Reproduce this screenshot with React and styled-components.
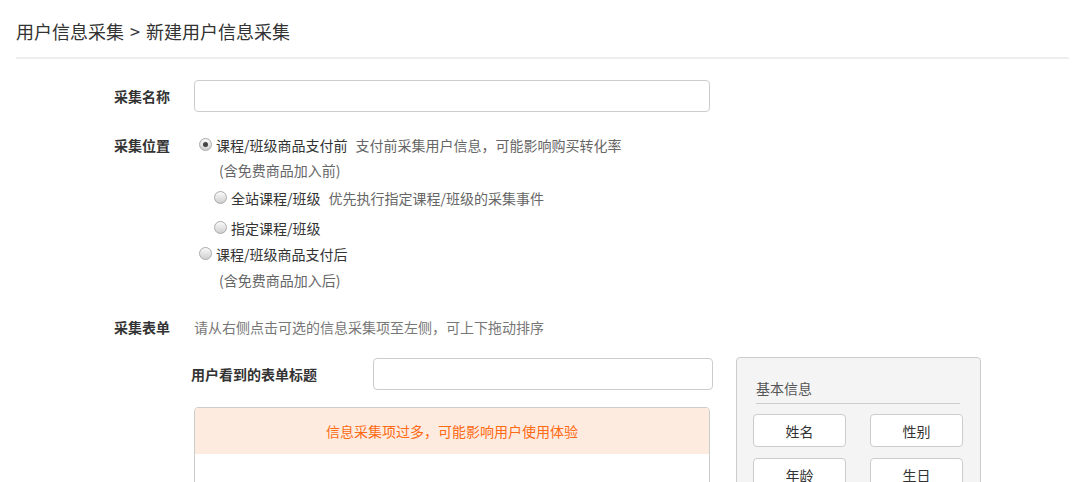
import React from "react";
import styled, { createGlobalStyle } from "styled-components";

const GlobalStyle = createGlobalStyle`
  body {
    margin: 0;
    background: #fff;
    font-family: "Noto Sans CJK SC", "Noto Sans", sans-serif;
    color: #333;
  }
  * { box-sizing: border-box; }
`;

const Page = styled.div`
  padding: 0 14px 0 16px;
  height: 482px;
  overflow: hidden;
`;

const Header = styled.div`
  padding: 19px 0 14px;
  font-size: 18px;
  line-height: 24px;
  color: #333;
  border-bottom: 2px solid #eee;
`;

const Sep = styled.span`
  margin: 0 2px;
`;

const Form = styled.div`
  padding-left: 98px;
  padding-top: 21px;
`;

const Row = styled.div`
  display: flex;
  align-items: ${(p) => (p.$top ? "flex-start" : "center")};
  margin-top: ${(p) => p.$mt || 0}px;
`;

const Label = styled.div`
  width: ${(p) => p.$w || 80}px;
  flex-shrink: 0;
  font-size: 14px;
  line-height: 20px;
  font-weight: bold;
  color: #333;
`;

const Input = styled.input`
  width: ${(p) => p.$w}px;
  height: 32px;
  border: 1px solid #ccc;
  border-radius: 4px;
  background: #fff;
  outline: none;
  padding: 0 10px;
  font-size: 14px;
`;

const Options = styled.div`
  display: flex;
  flex-direction: column;
`;

const Option = styled.label`
  display: flex;
  align-items: center;
  font-size: 14px;
  line-height: 20px;
  color: #333;
  margin-top: ${(p) => p.$mt || 0}px;
  padding-left: ${(p) => (p.$sub ? 20 : 5)}px;
`;

const Radio = styled.span`
  width: 13px;
  height: 13px;
  border-radius: 50%;
  border: 1px solid #aaa;
  background: linear-gradient(#fafafa, #cfcfcf);
  margin-right: 4px;
  margin-top: -2px;
  display: flex;
  align-items: center;
  justify-content: center;
  flex-shrink: 0;

  &::after {
    content: "";
    display: ${(p) => (p.$checked ? "block" : "none")};
    width: 5px;
    height: 5px;
    border-radius: 50%;
    background: #444;
  }
`;

const Desc = styled.span`
  color: #666;
  margin-left: 8px;
`;

const Note = styled.div`
  font-size: 14px;
  line-height: 20px;
  color: #666;
  padding-left: 25px;
  margin-top: ${(p) => p.$mt || 0}px;
`;

const Hint = styled.div`
  font-size: 14px;
  line-height: 20px;
  color: #777;
`;

const Builder = styled.div`
  display: flex;
  align-items: flex-start;
  margin-left: 77px;
  margin-top: 21px;
  gap: 23px;
`;

const LeftCol = styled.div`
  width: 522px;
`;

const WarnBox = styled.div`
  margin: 17px 0 0 3px;
  width: 516px;
  min-height: 200px;
  border: 1px solid #ccc;
  border-radius: 4px;
  background: #fff;
  overflow: hidden;
`;

const WarnBar = styled.div`
  height: 46px;
  background: #fdebe0;
  color: #ff6a13;
  font-size: 14px;
  display: flex;
  align-items: center;
  justify-content: center;
`;

const Panel = styled.div`
  width: 245px;
  margin-top: -1px;
  min-height: 200px;
  background: #f4f4f4;
  border: 1px solid #ccc;
  border-radius: 4px;
  padding: 20px 18px 0 16px;
`;

const PanelTitle = styled.div`
  margin: 0 2px 0 3px;
  font-size: 14px;
  line-height: 20px;
  color: #555;
  padding-bottom: 5px;
  border-bottom: 1px solid #ccc;
`;

const FieldGrid = styled.div`
  display: grid;
  grid-template-columns: 93px 93px;
  column-gap: 24px;
  row-gap: 11px;
  margin-top: 10px;
`;

const FieldBtn = styled.button`
  height: 33px;
  background: #fff;
  border: 1px solid #ccc;
  border-radius: 4px;
  font-family: inherit;
  font-size: 14px;
  color: #333;
  padding: 0;
`;

const fields = ["姓名", "性别", "年龄", "生日"];

export default function App() {
  return (
    <Page>
      <GlobalStyle />
      <Header>
        用户信息采集<Sep> &gt; </Sep>新建用户信息采集
      </Header>
      <Form>
        <Row>
          <Label>采集名称</Label>
          <Input $w={516} />
        </Row>

        <Row $top $mt={23}>
          <Label>采集位置</Label>
          <Options>
            <Option>
              <Radio $checked />
              课程/班级商品支付前
              <Desc>支付前采集用户信息，可能影响购买转化率</Desc>
            </Option>
            <Note $mt={5}>(含免费商品加入前)</Note>
            <Option $sub $mt={8}>
              <Radio />
              全站课程/班级
              <Desc>优先执行指定课程/班级的采集事件</Desc>
            </Option>
            <Option $sub $mt={10}>
              <Radio />
              指定课程/班级
            </Option>
            <Option $mt={6}>
              <Radio />
              课程/班级商品支付后
            </Option>
            <Note $mt={6}>(含免费商品加入后)</Note>
          </Options>
        </Row>

        <Row $mt={27}>
          <Label>采集表单</Label>
          <Hint>请从右侧点击可选的信息采集项至左侧，可上下拖动排序</Hint>
        </Row>

        <Builder>
          <LeftCol>
            <Row>
              <Label $w={182}>用户看到的表单标题</Label>
              <Input $w={340} />
            </Row>
            <WarnBox>
              <WarnBar>信息采集项过多，可能影响用户使用体验</WarnBar>
            </WarnBox>
          </LeftCol>
          <Panel>
            <PanelTitle>基本信息</PanelTitle>
            <FieldGrid>
              {fields.map((f) => (
                <FieldBtn key={f}>{f}</FieldBtn>
              ))}
            </FieldGrid>
          </Panel>
        </Builder>
      </Form>
    </Page>
  );
}
